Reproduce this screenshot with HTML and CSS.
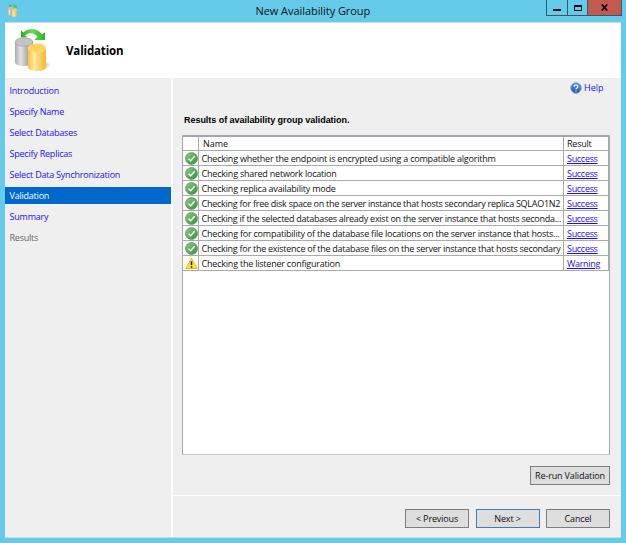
FILE: index.html
```html
<!DOCTYPE html>
<html lang="en">
<head>
<meta charset="utf-8">
<title>New Availability Group</title>
<link rel="stylesheet" href="styles.css">
</head>
<body>
<svg width="0" height="0" class="defs">
  <defs>
    <linearGradient id="gray" x1="0" x2="1"><stop offset="0" stop-color="#aaa"/><stop offset=".3" stop-color="#e2e2e2"/><stop offset="1" stop-color="#858585"/></linearGradient>
    <linearGradient id="gold" x1="0" x2="1"><stop offset="0" stop-color="#f8c040"/><stop offset=".35" stop-color="#ffeaa0"/><stop offset="1" stop-color="#f7b52c"/></linearGradient>
    <linearGradient id="arrow" x1="0" x2="1"><stop offset="0" stop-color="#27a52b"/><stop offset=".45" stop-color="#66dc55"/><stop offset="1" stop-color="#30b52d"/></linearGradient>
    <radialGradient id="shade"><stop offset="0" stop-color="#888" stop-opacity=".8"/><stop offset="1" stop-color="#aaa" stop-opacity="0"/></radialGradient>
    <linearGradient id="green" x1="0" y1="0" x2="1" y2="1"><stop offset="0" stop-color="#8cca85"/><stop offset="1" stop-color="#36913a"/></linearGradient>
    <linearGradient id="blue" x1="0" y1="0" x2="0" y2="1"><stop offset="0" stop-color="#5f97d6"/><stop offset="1" stop-color="#1e55aa"/></linearGradient>
    <symbol id="databases" viewBox="0 0 38 44">
      <ellipse cx="29" cy="37" rx="8" ry="4" fill="url(#shade)"/>
      <path d="M1 14v20c0 5.500 18 5.500 18 0V14z" fill="url(#gray)"/>
      <ellipse cx="10" cy="14" rx="8.800" ry="4.200" fill="#c4c4c4" stroke="#a4a4a4" stroke-width=".8"/>
      <path d="M14 20v19c0 5.500 18 5.500 18 0V20z" fill="url(#gold)"/>
      <ellipse cx="23" cy="20" rx="8.800" ry="4.200" fill="#ffd25a" stroke="#ffdf82" stroke-width=".8"/>
      <path d="M7 2.500v6.800h6.500L11 7.200c4-3 9-2.700 12.200 1.200L20.500 12H31V4.500l-3 1.800C23-.2 14.500-.8 9.500 4.500z" fill="url(#arrow)"/>
    </symbol>
    <symbol id="success" viewBox="0 0 13 13">
      <circle cx="6.500" cy="6.500" r="6" fill="url(#green)" stroke="#549956" stroke-width=".7"/>
      <path d="M3.500 6.700l2.200 2.100 3.900-4.600" fill="none" stroke="#fff" stroke-width="1.400"/>
    </symbol>
    <symbol id="warning" viewBox="0 0 13 13">
      <path d="M6.500 1.300L12.200 11.500H.8z" fill="#ffe928" stroke="#d8bd1c" stroke-width="1" stroke-linejoin="round"/>
      <path d="M6.500 4.200v4M6.500 9.200v1.500" stroke="#221d00" stroke-width="1.500"/>
    </symbol>
  </defs>
</svg>
<div class="window">
  <header class="titlebar">
    <svg class="app-icon"><use href="#databases"/></svg>
    <h1>New Availability Group</h1>
    <div class="controls">
      <span class="control minimize"><i></i></span>
      <span class="control maximize"><i></i></span>
      <span class="control close"><svg width="7" height="7" viewBox="0 0 7 7"><path d="M.8.5L6.200 6.500M6.200.5L.8 6.500" stroke="#111" stroke-width="1.800"/></svg></span>
    </div>
  </header>
  <div class="client">
    <section class="banner">
      <svg class="banner-icon"><use href="#databases"/></svg>
      <h2>Validation</h2>
    </section>
    <div class="body">
      <nav>
        <a>Introduction</a><a>Specify Name</a><a>Select Databases</a><a>Specify Replicas</a><a>Select Data Synchronization</a><a class="active">Validation</a><a>Summary</a><a class="disabled">Results</a>
      </nav>
      <main>
        <section class="content">
          <div class="help"><svg width="12" height="12" viewBox="0 0 12 12"><circle cx="6" cy="6" r="5.300" fill="url(#blue)" stroke="#88a7ce"/><path d="M4.200 4.700c0-2.300 3.700-2.200 3.700 0C7.900 6 6 5.900 6 7.300M6 8.400v1.200" fill="none" stroke="#fff" stroke-width="1.200"/></svg><a>Help</a></div>
          <h3>Results of availability group validation.</h3>
          <div class="results">
            <div class="row head"><span></span><span>Name</span><span>Result</span></div>
            <div class="row"><span><svg><use href="#success"/></svg></span><span>Checking whether the endpoint is encrypted using a compatible algorithm</span><span><a>Success</a></span></div>
            <div class="row"><span><svg><use href="#success"/></svg></span><span>Checking shared network location</span><span><a>Success</a></span></div>
            <div class="row"><span><svg><use href="#success"/></svg></span><span>Checking replica availability mode</span><span><a>Success</a></span></div>
            <div class="row long"><span><svg><use href="#success"/></svg></span><span>Checking for free disk space on the server instance that hosts secondary replica SQLAO1N2</span><span><a>Success</a></span></div>
            <div class="row long"><span><svg><use href="#success"/></svg></span><span>Checking if the selected databases already exist on the server instance that hosts seconda...</span><span><a>Success</a></span></div>
            <div class="row"><span><svg><use href="#success"/></svg></span><span>Checking for compatibility of the database file locations on the server instance that hosts...</span><span><a>Success</a></span></div>
            <div class="row long"><span><svg><use href="#success"/></svg></span><span>Checking for the existence of the database files on the server instance that hosts secondary</span><span><a>Success</a></span></div>
            <div class="row"><span><svg><use href="#warning"/></svg></span><span>Checking the listener configuration</span><span><a>Warning</a></span></div>
          </div>
          <button class="rerun">Re-run Validation</button>
        </section>
        <footer><button>&lt; Previous</button><button class="default">Next &gt;</button><button>Cancel</button></footer>
      </main>
    </div>
  </div>
</div>
</body>
</html>
```
FILE: styles.css
```css
* { box-sizing: border-box; }
body { margin: 0; width: 626px; height: 543px; overflow: hidden; font: 9px/15px "Open Sans", "Noto Sans", sans-serif; letter-spacing: -.22px; color: #111; }
.defs { position: absolute; }
svg { display: block; flex: none; }
h1, h2, h3 { margin: 0; }
.window { width: 626px; height: 543px; padding: 0 5px 5px; background: #66caea; display: flex; flex-direction: column; }
.titlebar { height: 22px; display: flex; align-items: flex-start; }
.app-icon { width: 12px; height: 13px; margin: 4px 0 0 2px; }
h1 { flex: 1; padding-left: 236.500px; font-size: 11px; line-height: 22px; font-weight: 400; letter-spacing: -.06px; white-space: nowrap; }
.controls { display: flex; height: 16px; margin-right: -1px; border: solid #365a68; border-width: 0 1px 1px; }
.control { display: flex; align-items: center; justify-content: center; width: 20px; border-right: 1px solid #365a68; }
.minimize { width: 21px; }
.minimize i { width: 8px; height: 2px; margin-top: 4px; background: #111; }
.maximize i { width: 8px; height: 6px; border: 1px solid #111; border-width: 2px 1px 1px; }
.close { width: 33px; border: 0; background: #c25a51; }
.client { flex: 1; display: flex; flex-direction: column; background: #efefef; border: solid #cbdde5; border-width: 1px 0; }
.banner { height: 55px; display: flex; align-items: center; background: #fff; }
.banner-icon { width: 38px; height: 44px; margin: 0 0 2px 9px; }
h2 { margin: 1px 0 0 14px; font-size: 11.500px; line-height: 16px; font-weight: 700; letter-spacing: -.14px; color: #000; }
.body { flex: 1; display: flex; min-height: 0; }
nav { width: 166px; padding-top: 4px; display: flex; flex-direction: column; gap: 4px; }
nav a { height: 17px; line-height: 17px; padding-left: 4.500px; color: #1d0ff5; white-space: nowrap; }
nav .active { background: #0067cd; color: #fff; }
nav .disabled { color: #666; }
main { flex: 1; display: flex; flex-direction: column; border-left: 2px solid #fafafa; }
.content { height: 417px; padding: 0 11px 0 9px; display: flex; flex-direction: column; }
.help { display: flex; align-self: flex-end; align-items: center; gap: 2px; height: 19px; margin-right: 6.500px; color: #1d0ff5; letter-spacing: 0; }
h3 { margin-top: 16px; padding-left: 2px; font: 700 9px/15px "Liberation Sans", sans-serif; letter-spacing: -.04px; color: #000; white-space: nowrap; }
.results { height: 320px; margin-top: 7px; border: 1px solid #a5a5ad; border-top-width: 2px; border-bottom-color: #ccc; background: #fff; }
.row { display: grid; grid-template-columns: 16px 365px 1fr; height: 15px; border-bottom: 1px solid #aaa; }
.row span { border-right: 1px solid #aaa; padding-left: 3px; line-height: 15px; white-space: nowrap; overflow: hidden; }
.row span:nth-child(2) { padding-left: 2.600px; }
.row span:first-child { padding: .5px 0 0 1.500px; }
.row svg { width: 13px; height: 13px; }
.row a { color: #1d0ff5; text-decoration: underline; letter-spacing: -.3px; }
.long span:nth-child(2) { letter-spacing: -.26px; }
.head { height: 14px; }
.head span { line-height: 14px; }
.head span:nth-child(2) { padding-left: 4px; letter-spacing: 0; }
button { width: 64px; height: 19px; padding: 0; border: 1px solid #7d7d7d; border-radius: 0; background: #dedede; color: #111; font: inherit; letter-spacing: -.15px; line-height: 17px; }
.rerun { width: 80px; margin-top: 11px; align-self: flex-end; }
footer { flex: 1; display: flex; justify-content: flex-end; gap: 6.500px; padding: 13px 11px 0 0; border-top: 1px solid #fff; }
.default { border-color: #3d7eae; }
```
